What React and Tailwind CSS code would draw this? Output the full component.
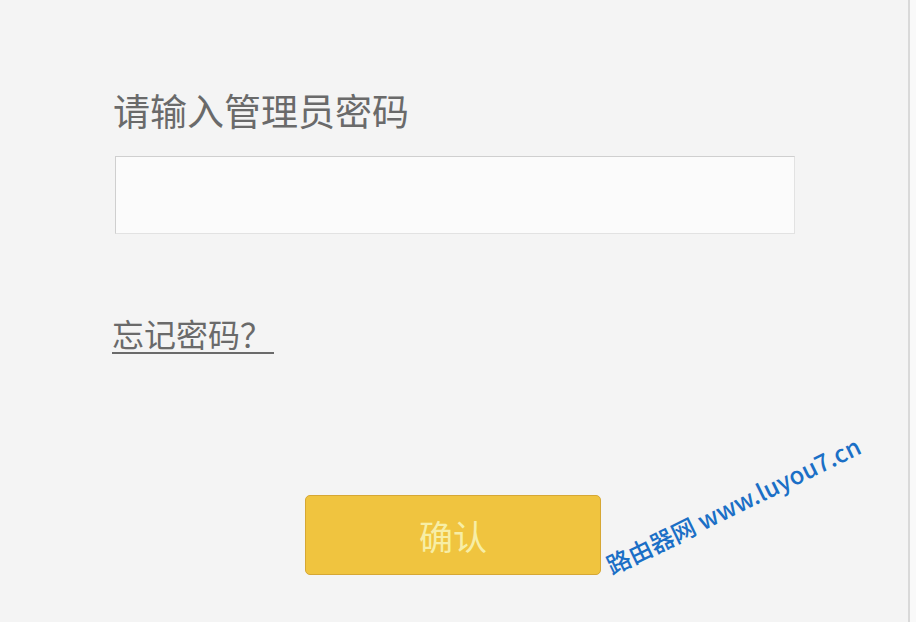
export default function App() {
  const cjk = { fontFamily: '"Noto Sans CJK SC", "Noto Sans", sans-serif' };
  return (
    <div className="flex h-[622px] w-[916px] overflow-hidden bg-[#f4f4f4]" style={cjk}>
      <div className="relative flex w-[908px] flex-col pl-[115px]">
        <div className="mt-[86px] h-[48px] text-[37px] leading-[48px] text-[#6a6a6a] -ml-[2px]">请输入管理员密码</div>
        <div className="mt-[22px] h-[78px] w-[680px] border border-t-[#cfcfcf] border-l-[#cfcfcf] border-r-[#e2e2e2] border-b-[#e2e2e2] bg-[#fbfbfb]" />
        <div className="mt-[80px] -ml-[3px]">
          <a className="inline-block border-b-2 border-[#6a6a6a] pr-[2px] text-[32px] leading-[38px] text-[#6a6a6a]">忘记密码？</a>
        </div>
        <div className="mt-[141px] ml-[190px] flex h-[80px] w-[296px] items-center justify-center rounded-[5px] border border-[#d6a734] bg-[#f0c43f] text-[34px] text-[#f7eea6]">
          确认
        </div>
        <div className="absolute left-[733px] top-[505px] -translate-x-1/2 -translate-y-1/2 -rotate-[26deg] whitespace-nowrap text-[24px] font-medium text-[#1b6fc6]">
          路由器网 www.luyou7.cn
        </div>
      </div>
      <div className="w-[2px] bg-[#d9d9d9]" />
      <div className="flex-1 bg-[#f9f9f9]" />
    </div>
  );
}
